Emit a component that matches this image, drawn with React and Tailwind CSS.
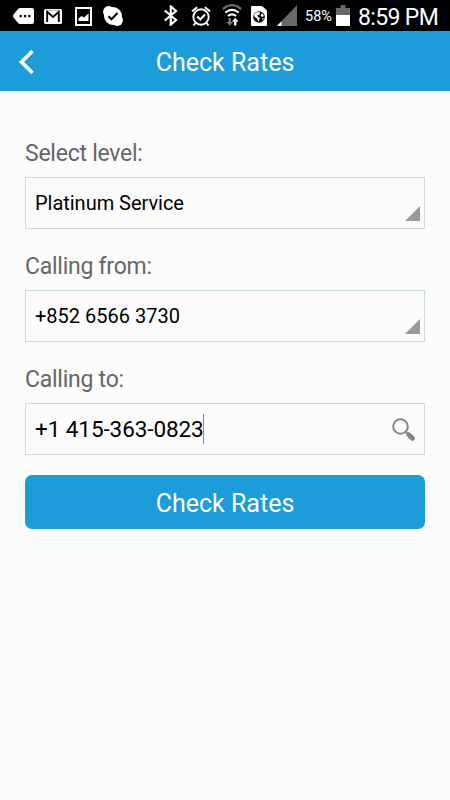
function StatusBar() {
  return (
    <div className="flex h-[31px] items-start bg-black text-white">
      <svg viewBox="0 0 21 16" className="mt-2 ml-[13px] h-4 w-[21px]">
        <path d="M7 0h12a2 2 0 0 1 2 2v12a2 2 0 0 1-2 2H7q-1 0-2-1L.5 9.5Q-.3 8 .5 6.500L5 1Q6 0 7 0z" fill="white" />
        <path d="M6.500 7h2.200v2.200H6.500zM10.900 7h2.200v2.200h-2.200zM15.300 7h2.200v2.200h-2.200z" fill="black" />
      </svg>
      <svg viewBox="0 0 18 15" className="mt-[9px] ml-[10px] h-[15px] w-[18px]">
        <rect width="18" height="15" rx="1.500" fill="white" />
        <path d="M3.200 13V2.800L9 8l5.800-5.200V13" fill="none" stroke="black" strokeWidth="1.900" />
        <path d="M2 1.300h14" stroke="#888" strokeWidth=".7" />
      </svg>
      <svg viewBox="0 0 17 19" className="mt-[7px] ml-[13px] h-[19px] w-[17px]">
        <path d="M1 1h15v17H1z" fill="black" stroke="white" strokeWidth="2" />
        <path d="M3.500 14V11.500l3-2.500 2.500 1.500 4.500-4V14z" fill="white" />
      </svg>
      <svg viewBox="0 0 20 20" className="mt-[6px] ml-[11px] h-5 w-5">
        <circle cx="10" cy="10" r="9" fill="white" />
        <circle cx="5.700" cy="5.700" r="5.600" fill="white" />
        <circle cx="14.300" cy="14.300" r="5.600" fill="white" />
        <path d="M5.500 10.200l3 3 6-6.200" fill="none" stroke="black" strokeWidth="2.100" />
      </svg>
      <svg viewBox="0 0 14 21" className="mt-[5px] ml-[41px] h-[21px] w-[14px]">
        <path d="M.8 5.500L12 15l-5.200 4.600V1.400L12 6 .8 15.500" fill="none" stroke="white" strokeWidth="2.200" />
      </svg>
      <svg viewBox="0 0 20 21" className="mt-[6px] ml-[13px] h-[21px] w-5">
        <circle cx="10" cy="11" r="7.700" fill="none" stroke="white" strokeWidth="1.900" />
        <path d="M1 5.400L6.200 1.300M19 5.400l-5.200-4.100M4.500 17l-2 2.500M15.500 17l2 2.500M6.300 10.500l3 3 4.700-5" fill="none" stroke="white" strokeWidth="2" />
      </svg>
      <svg viewBox="0 0 20 22" className="mt-1 ml-[11px] h-[22px] w-5">
        <path d="M.8 5q9.200-7.800 18.400 0" fill="none" stroke="#666" strokeWidth="2.300" />
        <path d="M3.300 8.600q6.700-5.400 13.400 0M6 12q4-3.400 8 0" fill="none" stroke="white" strokeWidth="2.200" />
        <path d="M6.500 14h2.500v4h2.200l-3.500 3.800L4.300 18h2.200z" fill="#777" />
        <path d="M12 21.500v-4H9.900l3.300-3.800 3.300 3.800h-2.100v4z" fill="white" />
      </svg>
      <svg viewBox="0 0 16 20" className="mt-[6px] ml-[9px] h-5 w-4">
        <path d="M1 0h10l5 4.500V19q0 1-1 1H1q-1 0-1-1V1q0-1 1-1z" fill="white" />
        <circle cx="8" cy="11" r="5.800" fill="black" />
        <path d="M3 8.500L6 6l3 .3-.5 2.200-2 1 .5 1.500 2 1-1.500 3.500-1.500-3-2.500-1.500zM11 7l2 3-2 1-1.500-1.500zM11 12.500l1.800-.5-1.300 2.500z" fill="white" />
      </svg>
      <svg viewBox="0 0 20 21" className="mt-[5px] ml-[10px] h-[21px] w-5">
        <path d="M20 0v21H0z" fill="#686868" />
        <path d="M4.500 16.300V21H0z" fill="white" />
      </svg>
      <span className="mt-[7px] ml-2 w-[28px] text-[14.500px] leading-5 whitespace-nowrap">58%</span>
      <svg viewBox="0 0 14 21" className="mt-[5px] ml-[3px] h-[21px] w-[14px]">
        <path d="M4.500 0h5v3H14v7H0V3h4.500z" fill="#686868" />
        <path d="M0 10h14v11H0z" fill="white" />
      </svg>
      <span className="mt-px ml-2 text-[23px] leading-[34px] tracking-[-0.65px] whitespace-nowrap">8:59 PM</span>
    </div>
  )
}

function Field({ label, children }) {
  return (
    <div className="h-[113px]">
      <div className="mb-[8px] h-[30px] text-[23px] leading-[30px] tracking-[-0.25px] text-[#666]">{label}</div>
      <div className="flex h-[52px] items-center justify-between border border-[#c9dcdf] bg-[#fcfcfc] pl-[9px]">
        {children}
      </div>
    </div>
  )
}

function Corner() {
  return (
    <svg viewBox="0 0 15 15" className="mr-1 mb-[7px] h-[15px] w-[15px] self-end">
      <path d="M15 0v15H0z" fill="#999" />
    </svg>
  )
}

export default function App() {
  return (
    <div className="h-[800px] w-[450px] overflow-hidden bg-[#fcfcfc] font-['Roboto',sans-serif]">
      <StatusBar />
      <header className="flex h-[60px] items-center bg-[#1c9dd9] text-white">
        <svg viewBox="0 0 16 26" className="mt-px ml-[18px] h-[26px] w-4">
          <path d="M14.500 2L3.500 13l11 11" fill="none" stroke="white" strokeWidth="3.600" />
        </svg>
        <h1 className="mr-[34px] flex-1 pt-1 text-center text-[25px] leading-8">Check Rates</h1>
      </header>
      <main className="px-[25px] pt-12">
        <Field label="Select level:">
          <span className="text-[20px] tracking-[-0.03px]">Platinum Service</span>
          <Corner />
        </Field>
        <Field label="Calling from:">
          <span className="text-[20px]">+852 6566 3730</span>
          <Corner />
        </Field>
        <Field label="Calling to:">
          <div className="flex items-center">
            <span className="pt-0.5 text-[22.500px] tracking-[-0.08px]">+1 415-363-0823</span>
            <span className="-ml-px h-[30px] w-px bg-[#888]" />
          </div>
          <svg viewBox="0 0 23 23" className="mr-[9px] h-[23px] w-[23px]">
            <circle cx="8.500" cy="8.500" r="7.300" fill="none" stroke="#858585" strokeWidth="2" />
            <path d="M13.500 13.500l3 3" stroke="#858585" strokeWidth="2" />
            <path d="M16.800 16.800l3.600 3.600" stroke="#858585" strokeWidth="4.800" strokeLinecap="round" />
          </svg>
        </Field>
        <button className="mt-[-3px] block h-[54px] w-full rounded-[7px] bg-[#1c9dd9] pt-1 text-[25px] text-white">Check Rates</button>
      </main>
    </div>
  )
}
